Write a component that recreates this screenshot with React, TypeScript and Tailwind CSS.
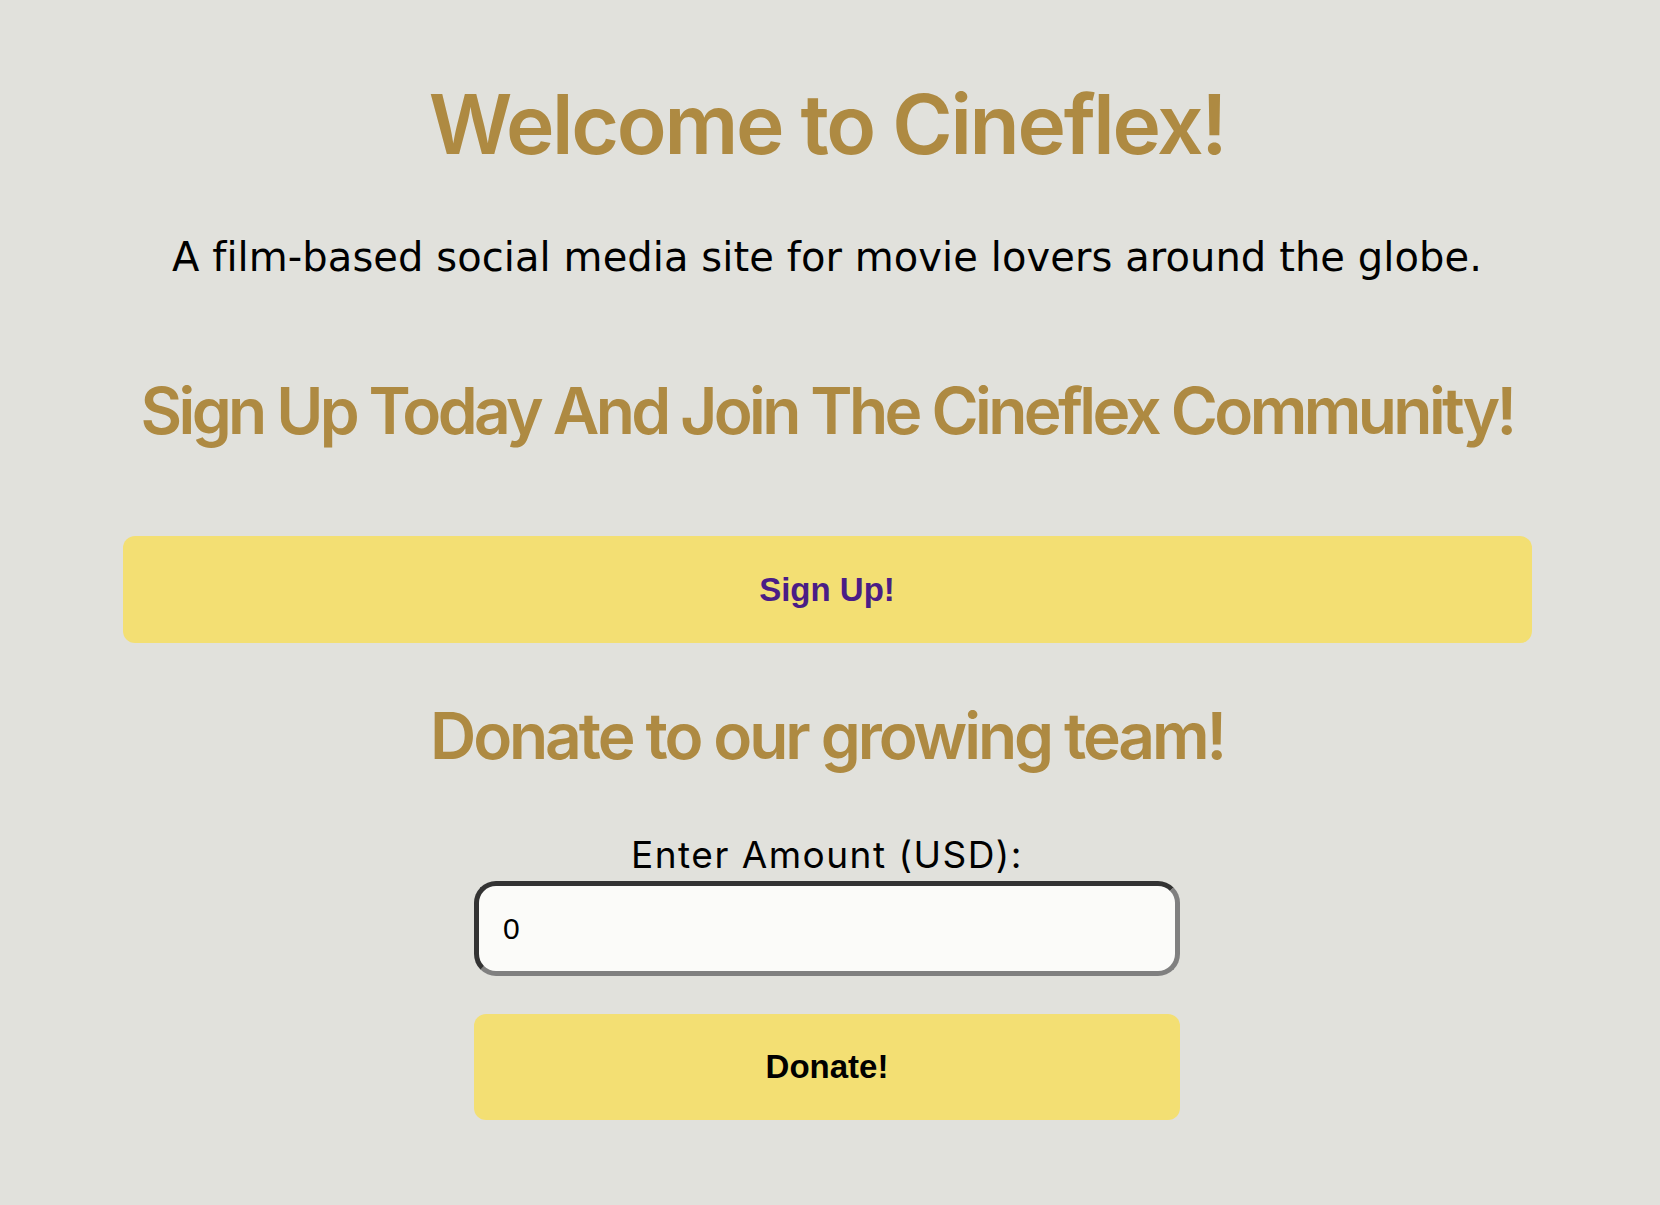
import React from "react";

export default function App() {
  const heading = "font-['Inter',sans-serif] font-semibold text-[#ae8a42] leading-none text-center whitespace-nowrap";
  return (
    <div className="min-h-[1205px] w-full bg-[#e1e1dc] flex flex-col items-center pt-[84px] pb-[85px] pr-[6px]">
      <h1 className={`${heading} text-[82px] tracking-[-0.028em] h-[82px]`}>Welcome to Cineflex!</h1>
      <p className="mt-[71px] font-['DejaVu_Sans',sans-serif] text-[40px] leading-none h-[40px] text-black text-center tracking-[0.002em]">
        A film-based social media site for movie lovers around the globe.
      </p>
      <h2 className={`${heading} mt-[102px] text-[64px] tracking-[-0.056em] h-[64px]`}>
        Sign Up Today And Join The Cineflex Community!
      </h2>
      <button className="mt-[93px] w-[1409px] h-[107px] rounded-[12px] bg-[#f3df73] font-['Liberation_Sans',sans-serif] font-bold text-[33px] text-[#4a1d86]">
        Sign Up!
      </button>
      <h2 className={`${heading} mt-[61px] text-[64px] tracking-[-0.048em] h-[64px]`}>Donate to our growing team!</h2>
      <label className="mt-[68px] font-['Inter',sans-serif] text-[37px] leading-none h-[37px] text-black text-center tracking-[0.04em]">
        Enter Amount (USD):
      </label>
      <input
        type="number"
        defaultValue={0}
        className="mt-[8px] w-[706px] h-[95px] rounded-[22px] border-[5px] border-t-[#333333] border-l-[#333333] border-r-[#808080] border-b-[#808080] bg-[#fbfbf9] px-[24px] font-['Liberation_Sans',sans-serif] text-[30px] text-black outline-none"
      />
      <button className="mt-[38px] w-[706px] h-[106px] rounded-[12px] bg-[#f3df73] font-['Liberation_Sans',sans-serif] font-bold text-[33px] text-black">
        Donate!
      </button>
    </div>
  );
}
